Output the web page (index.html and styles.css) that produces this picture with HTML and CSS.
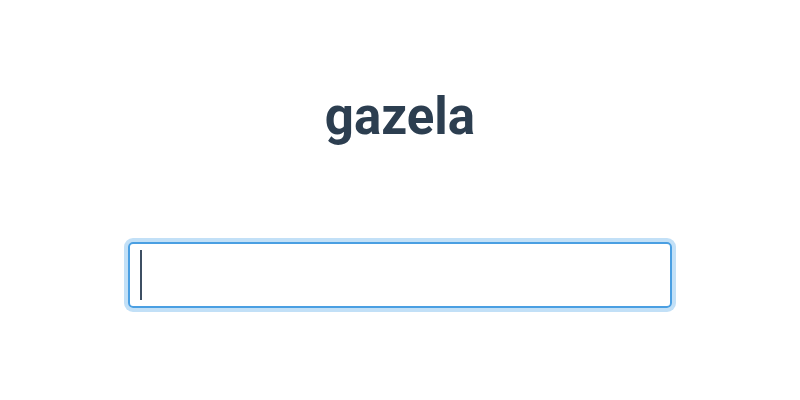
FILE: index.html
```html
<!DOCTYPE html>
<html>
<head>
<meta charset="utf-8">
<link rel="stylesheet" href="styles.css">
</head>
<body>
<div class="app">
  <h1 class="title">gazela</h1>
  <div class="field">
    <span class="caret"></span>
  </div>
</div>
</body>
</html>
```
FILE: styles.css
```css
html, body {
  margin: 0;
  padding: 0;
  background: #ffffff;
}
.app {
  width: 800px;
  height: 400px;
  display: flex;
  flex-direction: column;
  align-items: center;
  font-family: Roboto, "Liberation Sans", sans-serif;
  color: #2c3e50;
}
.title {
  margin: 87px 0 0 0;
  font-size: 51px;
  font-weight: 700;
  line-height: 60px;
}
.field {
  margin-top: 95px;
  width: 544px;
  height: 66px;
  box-sizing: border-box;
  border: 2px solid #4a9fe2;
  border-radius: 5px;
  box-shadow: 0 0 0 4px #c2e0f7;
  display: flex;
  align-items: center;
  padding-left: 10px;
}
.caret {
  width: 2px;
  height: 50px;
  background: #3d4f63;
}
```
